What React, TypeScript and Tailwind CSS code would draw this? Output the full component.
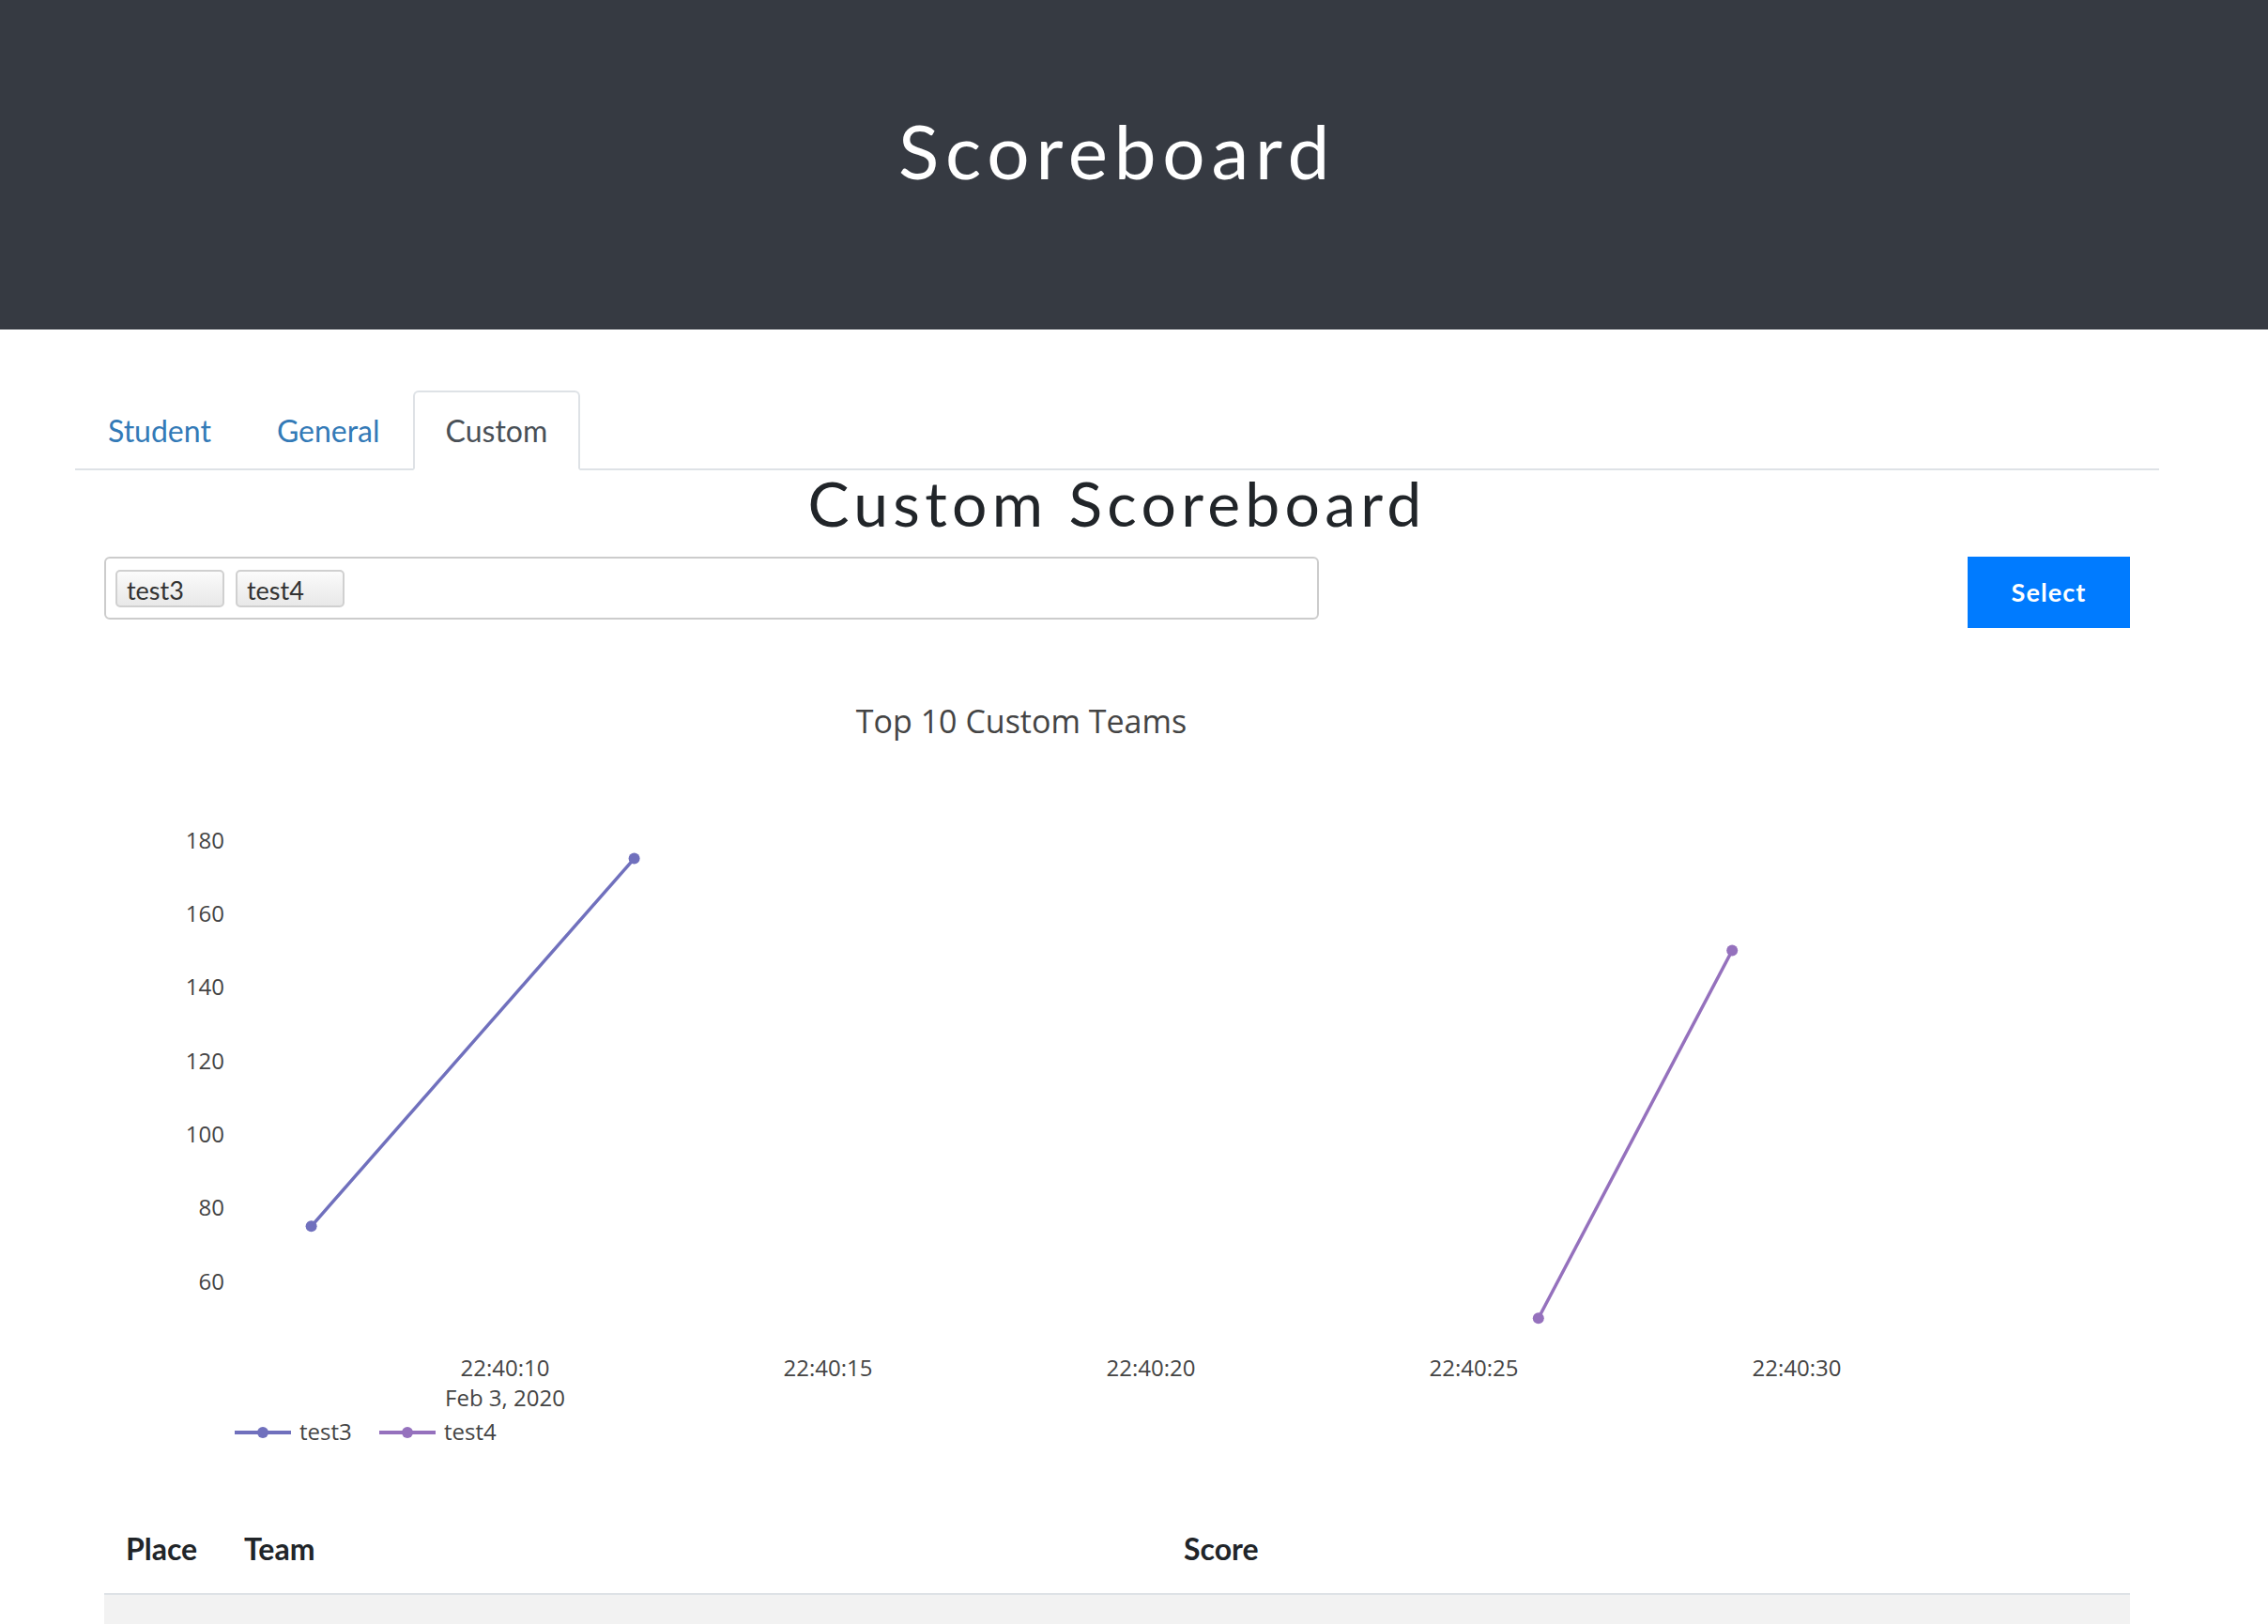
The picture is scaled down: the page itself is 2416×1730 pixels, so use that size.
import React from 'react';

type Series = {
    name: string;
    color: string;
    points: { t: number; v: number }[];
};

// seconds after 22:40:10, score
const series: Series[] = [
    { name: 'test3', color: '#7070bd', points: [{ t: -3.0, v: 75 }, { t: 2.0, v: 175 }] },
    { name: 'test4', color: '#9571bd', points: [{ t: 16.0, v: 50 }, { t: 19.0, v: 150 }] },
];

const xOf = (t: number) => 538 + t * 68.8;
const yOf = (v: number) => 895 + (180 - v) * 3.917;

const yTicks = [180, 160, 140, 120, 100, 80, 60];
const xTicks = [
    { t: 0, label: '22:40:10' },
    { t: 5, label: '22:40:15' },
    { t: 10, label: '22:40:20' },
    { t: 15, label: '22:40:25' },
    { t: 20, label: '22:40:30' },
];

const chartFont = "'Open Sans', 'Noto Sans', sans-serif";

const Chart = () => (
    <svg
        width={2159}
        height={860}
        viewBox="111 700 2159 860"
        className="block mt-[31px]"
        style={{ fontFamily: chartFont }}
    >
        <text x={1088} y={781} textAnchor="middle" fontSize={34} fill="#444">
            Top 10 Custom Teams
        </text>

        {yTicks.map((v) => (
            <text key={v} x={239} y={yOf(v) + 8.5} textAnchor="end" fontSize={24} fill="#444">
                {v}
            </text>
        ))}

        {xTicks.map((tk) => (
            <text key={tk.label} x={xOf(tk.t)} y={1466} textAnchor="middle" fontSize={24} fill="#444">
                {tk.label}
            </text>
        ))}
        <text x={xOf(0)} y={1498} textAnchor="middle" fontSize={24} fill="#444">
            Feb 3, 2020
        </text>

        {series.map((s) => (
            <g key={s.name}>
                <polyline
                    points={s.points.map((p) => `${xOf(p.t)},${yOf(p.v)}`).join(' ')}
                    fill="none"
                    stroke={s.color}
                    strokeWidth={3.5}
                />
                {s.points.map((p, i) => (
                    <circle key={i} cx={xOf(p.t)} cy={yOf(p.v)} r={6} fill={s.color} />
                ))}
            </g>
        ))}

        {/* legend */}
        {series.map((s, i) => {
            const x0 = 250 + i * 154;
            return (
                <g key={s.name}>
                    <line x1={x0} y1={1526} x2={x0 + 60} y2={1526} stroke={s.color} strokeWidth={4} />
                    <circle cx={x0 + 30} cy={1526} r={6} fill={s.color} />
                    <text x={x0 + 69} y={1534} fontSize={24} fill="#444">
                        {s.name}
                    </text>
                </g>
            );
        })}
    </svg>
);

const tabs = [
    { label: 'Student', active: false },
    { label: 'General', active: false },
    { label: 'Custom', active: true },
];

const App = () => {
    return (
        <div className="min-h-screen bg-white font-['Lato','Noto_Sans',sans-serif]">
            {/* Header */}
            <header className="h-[351px] bg-[#363a42] flex justify-center items-start">
                <h1 className="mt-[120px] mr-[36px] text-[80px] leading-none font-normal tracking-[0.085em] text-white">
                    Scoreboard
                </h1>
            </header>

            <div className="ml-[80px] w-[2220px]">
                {/* Tabs */}
                <ul className="mt-[65px] flex border-b-2 border-[#dee2e6]">
                    {tabs.map((tab) => (
                        <li key={tab.label} className="-mb-[2px]">
                            <a
                                className={
                                    tab.active
                                        ? 'h-[85px] px-[33px] flex items-center text-[32px] text-[#495057] bg-white border-2 border-[#dee2e6] border-b-white rounded-t-[6px]'
                                        : 'h-[85px] px-[33px] flex items-center text-[32px] text-[#337ab7] border-2 border-transparent'
                                }
                            >
                                {tab.label}
                            </a>
                        </li>
                    ))}
                </ul>

                <h2 className="mt-[2px] text-center text-[66px] leading-none font-normal tracking-[0.08em] text-[#212529]">
                    Custom Scoreboard
                </h2>

                <div className="px-[31px]">
                    {/* Team picker */}
                    <div className="mt-[24px] flex items-start justify-between">
                        <div className="w-[1294px] h-[67px] border-2 border-[#cccccc] rounded-[6px] flex items-center gap-[12px] px-[10px]">
                            {['test3', 'test4'].map((t) => (
                                <span
                                    key={t}
                                    className="w-[116px] h-[40px] flex items-center pl-[10px] pt-[5px] text-[27px] text-[#333] border-2 border-[#d0d0d0] rounded-[5px] bg-linear-to-b from-[#fbfbfb] to-[#e8e8e8]"
                                >
                                    {t}
                                </span>
                            ))}
                        </div>
                        <button className="w-[173px] h-[76px] bg-[#007bff] text-white text-[27px] font-bold tracking-[0.04em]">
                            Select
                        </button>
                    </div>

                    <Chart />

                    {/* Table */}
                    <table className="mt-[42px] w-full border-collapse text-[#212529]">
                        <thead>
                            <tr className="h-[96px] border-b-2 border-[#dee2e6]">
                                <th className="w-[126px] pl-[23px] text-left text-[32px] font-bold">Place</th>
                                <th className="w-[1001px] pl-[23px] text-left text-[32px] font-bold">Team</th>
                                <th className="pl-[23px] text-left text-[32px] font-bold">Score</th>
                            </tr>
                        </thead>
                        <tbody>
                            <tr className="h-[60px] bg-[#f2f2f2]">
                                <td></td>
                                <td></td>
                                <td></td>
                            </tr>
                        </tbody>
                    </table>
                </div>
            </div>
        </div>
    );
};

export default App;
